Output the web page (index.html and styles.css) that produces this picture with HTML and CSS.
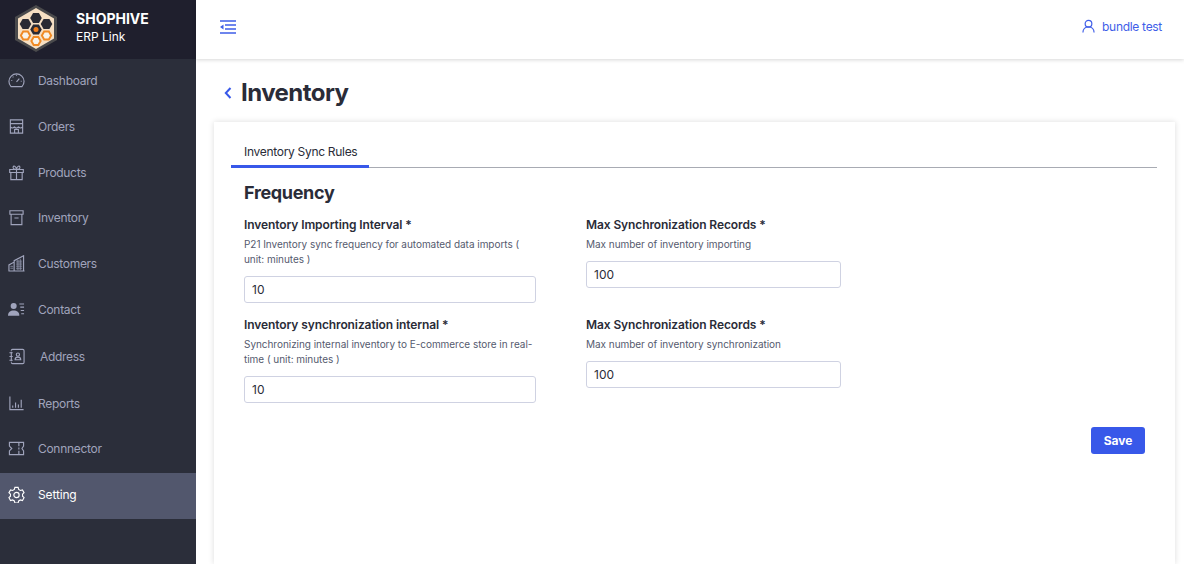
FILE: index.html
```html
<!DOCTYPE html>
<html lang="en">
<head>
<meta charset="utf-8">
<title>Inventory</title>
<link rel="stylesheet" href="styles.css">
</head>
<body>
<div class="app">
  <aside class="sidebar">
    <div class="brand">
      <svg class="logo" viewBox="0 0 44 48" width="44" height="48">
        <defs><path id="cell" d="M-5.800 0l2.900-5h5.800l2.900 5-2.900 5h-5.800z"/></defs>
        <path d="M22 1 43 13V36L22 48 1 36V13Z" fill="#4a4a4c"/>
        <path d="M22 4 40 14.500V34.500L22 45 4 34.500V14.500Z" fill="#f6dfc3"/>
        <g fill="#2a2a33">
          <use href="#cell" x="22" y="14"/>
          <use href="#cell" x="11.500" y="20"/>
          <use href="#cell" x="32.500" y="20"/>
          <use href="#cell" x="22" y="25.500"/>
        </g>
        <circle cx="22" cy="25.500" r="2.500" fill="#ef7d1a"/>
        <g fill="#f8f3ea" stroke="#f08a24" stroke-width="2.400">
          <use href="#cell" transform="translate(11.500 31.500) scale(.8)"/>
          <use href="#cell" transform="translate(32.500 31.500) scale(.8)"/>
          <use href="#cell" transform="translate(22 37) scale(.8)"/>
        </g>
      </svg>
      <div class="brand-text">
        <div class="brand-name">SHOPHIVE</div>
        <div class="brand-sub">ERP Link</div>
      </div>
    </div>
    <nav class="nav">
      <a class="nav-item">
        <svg class="icon" viewBox="0 0 18 18"><path d="M3.200 15.500a8 8 0 1 1 11.600 0z"/><path d="M9 10.500l3-3.500M3.500 9h1M13.500 9.800h1M5 5l.7.700M9 3v1"/></svg>
        <span>Dashboard</span>
      </a>
      <a class="nav-item">
        <svg class="icon" viewBox="0 0 18 18"><path d="M2.500 2h13v14h-13zM2.500 6h13M2.500 9.500c1.300 1.400 3 1.400 4.300 0 1.300 1.400 3 1.400 4.400 0 1.300 1.400 3 1.400 4.300 0M7 16v-4h4v4"/></svg>
        <span>Orders</span>
      </a>
      <a class="nav-item">
        <svg class="icon" viewBox="0 0 18 18"><path d="M1.800 5.800h14.400v3.200H1.800zM3 9v7.500h12V9M9 5.800v10.700M9 5.800C6 5.800 5 4.500 5.500 3 6.300 1.300 8.500 2.500 9 5.800c.5-3.300 2.700-4.500 3.500-2.800.5 1.500-.5 2.800-3.500 2.800z"/></svg>
        <span>Products</span>
      </a>
      <a class="nav-item nav-up">
        <svg class="icon" viewBox="0 0 18 18"><path d="M2 1.800h14v3.700H2zM3.300 5.500v11h11.400v-11M6.800 9.500h4.400"/></svg>
        <span>Inventory</span>
      </a>
      <a class="nav-item nav-up">
        <svg class="icon" viewBox="0 0 18 18"><path d="M.5 17h17M1 17v-6.500l5.500-3V17M6.500 17V6L16.500 .8V17"/><path class="dots" d="M2.500 12h3M2.500 14h3M8.500 6.500h6.500M8.500 8.500h6.500M8.500 10.500h6.500M8.500 12.500h6.500M8.500 14.500h6.500M10.500 5v11M13 4v12"/></svg>
        <span>Customers</span>
      </a>
      <a class="nav-item nav-up">
        <svg class="icon" viewBox="0 0 18 18"><circle class="solid" cx="6" cy="5.200" r="3.200"/><path class="solid" d="M0 15.500c0-4 2.500-5.500 6-5.500s6 1.500 6 5.500z"/><path d="M12 3.200h5M13 6.500h4M13.500 10h3.500M14 13.500h3"/></svg>
        <span>Contact</span>
      </a>
      <a class="nav-item nav-address">
        <svg class="icon" viewBox="0 0 18 18"><path d="M3.500 3V2.500a1.500 1.500 0 0 1 1.500-1h10.500a1.500 1.500 0 0 1 1.500 1.500v12a1.500 1.500 0 0 1-1.500 1.500H5a1.500 1.500 0 0 1-1.500-1.500V15"/><path d="M1.500 5h3.500M1.500 9h3.500M1.500 13h3.500M3.500 4v10"/><circle cx="10.500" cy="7" r="1.700"/><path d="M7.500 12.500c0-2 1.300-2.800 3-2.800s3 .8 3 2.800z"/></svg>
        <span>Address</span>
      </a>
      <a class="nav-item nav-down">
        <svg class="icon" viewBox="0 0 18 18"><path d="M2 1.500v14h14.500M5 11v2.500M8 8v5.500M11 10v3.500M14 5v8.500"/></svg>
        <span>Reports</span>
      </a>
      <a class="nav-item">
        <svg class="icon" viewBox="0 0 18 18"><path d="M1.500 2.500h15v4l-1.700 2.500 1.700 2.500v4h-15v-4L4 9 1.500 6.500zM11.500 2.500v4M11.500 8v2M11.500 11.500v4"/></svg>
        <span>Connnector</span>
      </a>
      <a class="nav-item active">
        <svg class="icon" viewBox="0 0 18 18"><path d="M7.300 1.500h3.400l.6 2.200 1.800 1 2.200-.6 1.700 3-1.600 1.600v2.100l1.600 1.600-1.700 3-2.200-.6-1.800 1-.6 2.200H7.300l-.6-2.200-1.800-1-2.200.6-1.700-3 1.600-1.600V8.700L1 7.100l1.700-3 2.200.6 1.800-1z"/><circle cx="9" cy="9.500" r="2.800"/></svg>
        <span>Setting</span>
      </a>
    </nav>
  </aside>
  <div class="main">
    <header class="topbar">
      <svg class="menu-icon" viewBox="0 0 16 14" width="16" height="14"><path d="M0 1h16M5 5h11M5 9h11M0 13h16"/><path class="menu-arrow" d="M0 7l3.500-2.500v5z"/></svg>
      <div class="user">
        <svg class="user-icon" viewBox="0 0 14 15" width="13" height="14"><circle cx="7" cy="5" r="3.600"/><path d="M1 14.500c0-3.500 2.500-6 6-6s6 2.500 6 6"/></svg>
        <span>bundle test</span>
      </div>
    </header>
    <div class="page-head">
      <svg class="back" viewBox="0 0 8 12" width="8" height="12"><path d="M6.500 1 1.800 6l4.700 5"/></svg>
      <h1>Inventory</h1>
    </div>
    <section class="card">
      <div class="tabs"><div class="tab">Inventory Sync Rules</div></div>
      <div class="panel">
        <h2>Frequency</h2>
        <form class="form-grid">
          <div class="field">
            <label>Inventory Importing Interval *</label>
            <p>P21 Inventory sync frequency for automated data imports ( unit: minutes )</p>
            <input type="text" value="10">
          </div>
          <div class="field">
            <label>Max Synchronization Records *</label>
            <p>Max number of inventory importing</p>
            <input type="text" value="100">
          </div>
          <div class="field">
            <label>Inventory synchronization internal *</label>
            <p>Synchronizing internal inventory to E-commerce store in real-time ( unit: minutes )</p>
            <input type="text" value="10">
          </div>
          <div class="field">
            <label>Max Synchronization Records *</label>
            <p>Max number of inventory synchronization</p>
            <input type="text" value="100">
          </div>
        </form>
        <div class="actions"><button type="button">Save</button></div>
      </div>
    </section>
  </div>
</div>
</body>
</html>
```
FILE: styles.css
```css
* { box-sizing: border-box; }
html, body { margin: 0; height: 100%; overflow: hidden; }
body { font-family: Inter, "Liberation Sans", sans-serif; color: #2a2c38; background: #fff; }
.app { display: flex; height: 564px; }
.sidebar { width: 196px; flex: none; background: #2b2e3a; }
.brand { height: 59px; background: #1f1f2d; display: flex; align-items: center; padding-left: 14px; gap: 18px; }
.logo { flex: none; margin-top: -4px; }
.brand-text { margin-top: -5px; }
.brand-name { font-size: 14px; font-weight: 700; color: #fff; line-height: 18px; }
.brand-sub { font-size: 12px; color: #fff; line-height: 17px; }
.nav { display: flex; flex-direction: column; }
.nav-item { height: 46px; display: flex; align-items: center; gap: 13px; padding: 0 0 3px 8px; font-size: 12px; letter-spacing: -.3px; color: #a0a4bc; }
.nav-up { padding-bottom: 5px; }
.nav-down { padding-bottom: 1px; }
.nav-address { gap: 15px; }
.active { background: #52576d; color: #fff; letter-spacing: -.15px; }
.icon { width: 17px; height: 17px; flex: none; fill: none; stroke: currentColor; stroke-width: 1.200; }
.icon .solid { fill: currentColor; stroke: none; }
.icon .dots { stroke-width: .7; }
.main { flex: 1; min-width: 0; display: flex; flex-direction: column; }
.topbar { height: 59px; flex: none; display: flex; align-items: center; justify-content: space-between; padding: 0 22px 5px 24px; background: #fff; box-shadow: 0 1px 4px rgba(0, 0, 0, .16); }
.menu-icon { fill: none; stroke: #3f5ee8; stroke-width: 1.300; }
.menu-arrow { fill: #3f5ee8; stroke: none; }
.user { display: flex; align-items: center; gap: 7px; padding-bottom: 2px; font-size: 12px; letter-spacing: -.3px; color: #3f5ee8; }
.user-icon { fill: none; stroke: #3f5ee8; stroke-width: 1.300; }
.page-head { height: 63px; flex: none; display: flex; align-items: center; padding: 5px 0 0 28px; gap: 9px; }
.back { fill: none; stroke: #3858e9; stroke-width: 2; }
h1 { margin: 0; font-size: 24px; font-weight: 700; line-height: 30px; letter-spacing: -.55px; color: #2a2c38; }
.card { flex: 1; margin: 0 9px 0 18px; padding: 13px 18px 0 17px; background: #fff; box-shadow: 0 0 6px rgba(0, 0, 0, .14); }
.tabs { border-bottom: 1px solid #a8abb3; height: 33px; }
.tab { width: 138px; height: 33px; padding: 9px 0 0 13px; font-size: 12px; line-height: 16px; letter-spacing: -.3px; color: #2a2c38; border-bottom: 3px solid #3858e9; }
.panel { padding: 0 12px 0 13px; }
h2 { margin: 14px 0 13px; font-size: 18px; font-weight: 700; line-height: 22px; letter-spacing: -.33px; color: #2a2c38; }
.form-grid { display: grid; grid-template-columns: 292px 255px; column-gap: 50px; grid-auto-rows: 100px; }
.field label { display: block; font-size: 12px; font-weight: 600; line-height: 16px; letter-spacing: -.1px; color: #2a2c38; margin-bottom: 4px; }
.field p { margin: 0 0 9px; font-size: 10px; line-height: 15px; letter-spacing: -.04px; color: #555a6e; }
.field input { display: block; width: 100%; height: 27px; padding: 0 7px; border: 1px solid #cfd2e2; border-radius: 3px; font: 12px Inter, "Liberation Sans", sans-serif; color: #2a2c38; background: #fff; }
.actions { display: flex; justify-content: flex-end; margin-top: 10px; }
button { width: 54px; height: 27px; border: 0; border-radius: 3px; background: #3858e9; color: #fff; font: 700 12px Inter, "Liberation Sans", sans-serif; }
```
